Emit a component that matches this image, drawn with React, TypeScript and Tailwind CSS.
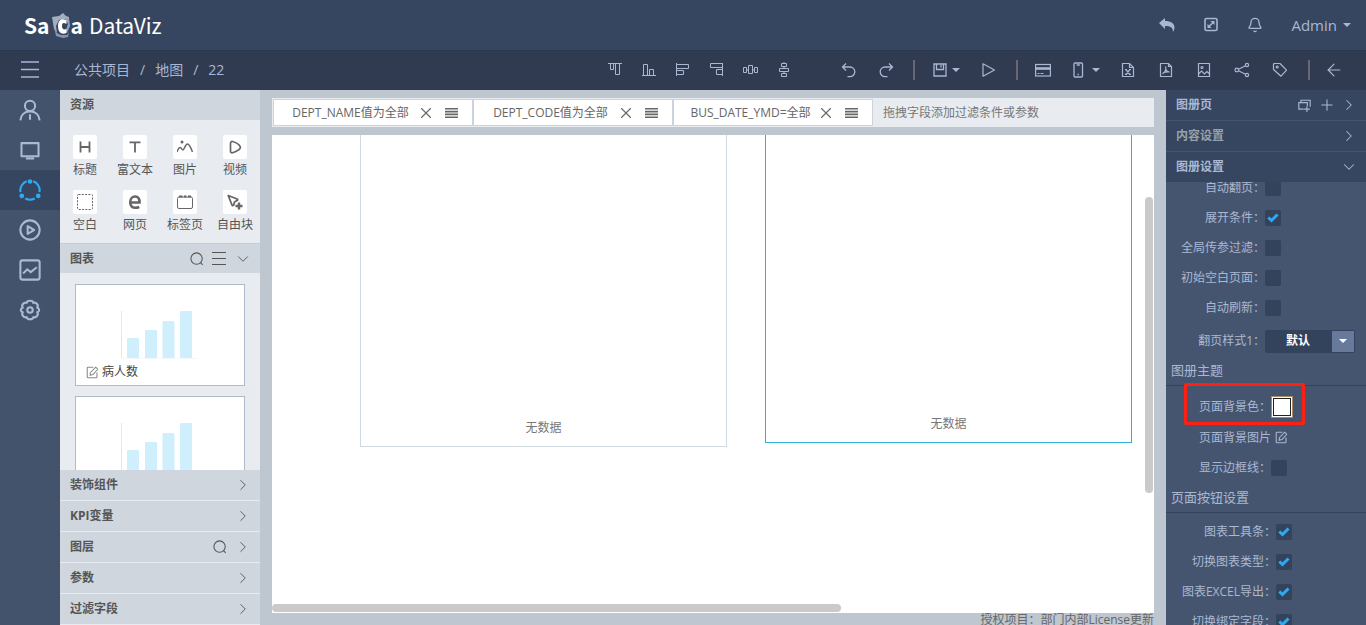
import type { ReactNode } from "react";
import { ArrowLeft, Bell, ChevronDown, ChevronRight, Plus, X } from "lucide-react";

interface IconProps {
  size?: number;
  width?: number;
  className?: string;
  children: ReactNode;
}

// 16x16 outline icon
function Icon({ size = 16, width = 1, className = "", children }: IconProps) {
  return (
    <svg
      width={size}
      height={size}
      viewBox="0 0 16 16"
      fill="none"
      stroke="currentColor"
      strokeWidth={width}
      className={`shrink-0 ${className}`}
      aria-hidden="true"
    >
      {children}
    </svg>
  );
}

function Caret() {
  return (
    <svg width="8" height="4" viewBox="0 0 8 4" fill="currentColor" className="shrink-0" aria-hidden="true">
      <path d="M0 0h8L4 4z" />
    </svg>
  );
}

function SearchIcon() {
  return (
    <Icon size={14} width={1.2}>
      <circle cx="7.5" cy="7.5" r="6.5" />
      <path d="M12 12.2l2.5 2.5" />
    </Icon>
  );
}

const alignTools = [
  { label: "顶端对齐", icon: <path d="M1 1.5h14M3.5 1.5v6h3v-6M8.5 1.5v11h4v-11" /> },
  { label: "底端对齐", icon: <path d="M1 13.5h14M2.5 13.5v-11h4v11M8.5 13.5v-6h4v6" /> },
  { label: "左对齐", icon: <path d="M1.5 1v13M1.5 2.5h12v4h-12M1.5 8.5h7v4h-7" /> },
  { label: "右对齐", icon: <path d="M13.5 1v13M13.5 1.5h-12v4h12M13.5 7.5h-6v5h6" /> },
  {
    label: "水平分布",
    icon: <path d="M.5 5.5h3v5h-3zM5.5 3.5h4v8h-4zM11.5 5.5h3v5h-3zM3.5 8h2M9.5 8h2" />,
  },
  {
    label: "垂直分布",
    icon: <path d="M4.5 1.5h5v3h-5zM2.5 6.5h9v3h-9zM4.5 11.5h5v3h-5zM7 0v1.5M7 4.5v2M7 9.5v2" />,
  },
];

const fileTools = [
  {
    label: "导出Excel",
    icon: (
      <>
        <path d="M2.5 1.5h7l4 4v9h-11zM9.5 1.5v4h4" />
        <path d="M5.8 7.5l4.2 5M10 7.5l-4.2 5M5 7.5h2M9 7.5h2M5 12.5h2M9 12.5h2" />
      </>
    ),
  },
  {
    label: "导出PDF",
    icon: (
      <>
        <path d="M2.5 1.5h8l3 3v10h-11zM10.5 1.5v3h3" />
        <path d="M7.5 4.5c1 3-1 6-3 7.5M7.5 7c.8 2 2.2 3 4 3M5 10.8c2-.8 4-1.2 6.5-.8" />
      </>
    ),
  },
  {
    label: "导出图片",
    icon: (
      <>
        <path d="M2.5 1.5h11v13h-11zM2.5 12l3-3 3 3 2.5-2.5 3 3" />
        <circle cx="6" cy="5.5" r="1" />
      </>
    ),
  },
  {
    label: "分享",
    icon: (
      <>
        <circle cx="2.8" cy="8" r="1.8" />
        <circle cx="13" cy="3" r="1.6" />
        <circle cx="13" cy="13" r="1.6" />
        <path d="M4.5 7.2l7-3.4M4.5 8.8l7 3.4" />
      </>
    ),
  },
  {
    label: "标签",
    icon: (
      <>
        <path d="M1.5 2.5q0-1 1-1H8l6.500 6.700-5.500 6-7.500-6.700z" strokeLinejoin="round" />
        <circle cx="5.2" cy="5" r="1" />
      </>
    ),
  },
];

const railItems = [
  {
    label: "用户",
    icon: (
      <>
        <circle cx="8" cy="5" r="3.7" />
        <path d="M1 15.5C1.3 11.7 3.8 9 8 9s6.7 2.7 7 6.500M8 11v4" />
      </>
    ),
  },
  { label: "数据", icon: <path d="M1.8 3h12.400v9.500H1.800zM5 14.200h6" strokeLinejoin="round" /> },
  {
    label: "图册",
    icon: (
      <>
        <path d="M5.6 1.7A7 7 0 0 0 1.1 9.500M10.400 1.700a7 7 0 0 1 4.500 7.800M4.600 14.200a7 7 0 0 0 6.800 0" />
        <g fill="currentColor" stroke="none">
          <circle cx="8" cy="1.8" r="1.7" />
          <circle cx="2" cy="12.3" r="1.7" />
          <circle cx="14" cy="12.3" r="1.7" />
        </g>
      </>
    ),
  },
  {
    label: "播放",
    icon: (
      <>
        <circle cx="8" cy="8" r="7" />
        <path d="M6.3 5.2v5.6L11 8z" strokeLinejoin="round" />
      </>
    ),
  },
  {
    label: "分析",
    icon: (
      <>
        <rect x="1" y="1" width="14" height="14" rx="1.5" />
        <path d="M3 10.5l3-3 2.5 2L13 6" />
      </>
    ),
  },
  {
    label: "设置",
    icon: (
      <>
        <path
          d="M5.600 2.800C5.800.7 10.200.7 10.400 2.800c2-.8 4.300 1.800 2.800 3.600 2 .5 2 2.700 0 3.200 1.500 1.800-.8 4.400-2.800 3.600-.2 2.100-4.600 2.100-4.800 0-2 .8-4.300-1.800-2.800-3.600-2-.5-2-2.700 0-3.200C1.300 4.600 3.600 2 5.600 2.800z"
          strokeLinejoin="round"
        />
        <circle cx="8" cy="8" r="2" />
      </>
    ),
  },
];

const resources = [
  { label: "标题", icon: <path d="M3.500 2.500v11M12.500 2.500v11M3.500 8h9" strokeWidth="1.8" /> },
  { label: "富文本", icon: <path d="M2.500 3.300h11M8 3.300v10.200" strokeWidth="1.8" /> },
  {
    label: "图片",
    icon: (
      <>
        <path d="M0 13c1-3 2-4.500 3.200-4.500S5 11 6 11s2.500-6 4.500-6 3.500 4 5 8" strokeWidth="1.5" />
        <circle cx="5" cy="3" r="1.5" fill="currentColor" stroke="none" />
      </>
    ),
  },
  {
    label: "视频",
    icon: (
      <path
        d="M3.500 4.500v8c0 1 1 1.500 2 1.200C9 12.500 12 11 13 9.500c.6-.8.6-1.500 0-2.300C12 5.500 9 3.500 5.500 2.500c-1-.2-2 .5-2 2z"
        strokeWidth="1.7"
      />
    ),
  },
  { label: "空白", icon: <rect x=".5" y=".5" width="15" height="15" rx="1" strokeDasharray="2 1.3" /> },
  {
    label: "网页",
    icon: (
      <path
        d="M3 8.500h9.500C12.700 4.500 11 2.500 8.200 2.500S3.200 4.800 3.200 8.200s2 5.600 5.200 5.600c1.500 0 2.700-.3 3.800-1"
        strokeWidth="2.6"
      />
    ),
  },
  {
    label: "标签页",
    icon: (
      <>
        <rect x=".5" y="3" width="15" height="11.5" rx="1.5" />
        <path d="M2 2.500h3.500M7 2.500h2.500M11 2.500h3" strokeWidth="2" />
      </>
    ),
  },
  {
    label: "自由块",
    icon: (
      <>
        <path
          d="M1.200 1.500l9 3.500c.8.5.6 1-.2 1.500L7.500 8l-.8 3c-.5.8-1.300.8-1.700 0z"
          strokeWidth="1.8"
          strokeLinejoin="round"
        />
        <path d="M8.500 12h7M12 8.500v7" strokeWidth="2.4" />
      </>
    ),
  },
];

const sections = ["装饰组件", "KPI变量", "图层", "参数", "过滤字段"];
const filters = ["DEPT_NAME值为全部", "DEPT_CODE值为全部", "BUS_DATE_YMD=全部"];

const pageOptions = [
  { label: "自动翻页：", checked: false },
  { label: "展开条件：", checked: true },
  { label: "全局传参过滤：", checked: false },
  { label: "初始空白页面：", checked: false },
  { label: "自动刷新：", checked: false },
];

const buttonOptions = ["图表工具条：", "切换图表类型：", "图表EXCEL导出：", "切换绑定字段："];

function EditIcon({ className = "" }: { className?: string }) {
  return (
    <Icon size={13} width={1.3} className={className}>
      <path d="M9 1.500H2.500a1 1 0 0 0-1 1v11a1 1 0 0 0 1 1h10a1 1 0 0 0 1-1V8" />
      <path d="M5 11.500l.5-3.500L12 1.500 14.500 4 8.500 10.500z" strokeLinejoin="round" />
    </Icon>
  );
}

function Logo() {
  return (
    <a
      href="#"
      className="flex items-center pl-6 text-[21px] leading-none text-white font-['Noto_Sans_CJK_SC','Noto_Sans',sans-serif]"
    >
      <span className="font-bold">Sa</span>
      <svg width="21" height="26" viewBox="0 0 21 26" aria-hidden="true">
        <path d="M2 5l7-1 4-3 3 3 3 1v6l-4-4-6 1-3 6 1 7-3-4z" fill="#a3aebe" />
        <path d="M4 15l3 6 4 2h6l2-3-1 5-5 1-7-2z" fill="#8795a9" />
        <path d="M15 6l4 0 1 8-3 7-1-3 2-6z" fill="#96a3b5" />
        <path d="M16.500 8.500C12 5.500 8 8 8 14c0 6.500 3.500 9 8.500 7v-4c-3 1-4.500 0-4.500-3s1.500-3.800 4.500-2z" fill="#fff" />
      </svg>
      <span className="font-bold">a</span>
      <span className="pl-1.5">DataViz</span>
    </a>
  );
}

function ToolSeparator() {
  return <span className="ml-[9px] mr-1.5 h-5 w-0.5 bg-[#666a70]" />;
}

function Checkbox({ id, checked }: { id: string; checked: boolean }) {
  return (
    <span className="relative size-4">
      <input
        id={id}
        type="checkbox"
        defaultChecked={checked}
        className="peer block size-4 appearance-none rounded-xs bg-[#34435c]"
      />
      <svg
        viewBox="0 0 16 16"
        className="pointer-events-none absolute inset-0 hidden size-4 peer-checked:block"
        fill="none"
        stroke="#2cabf2"
        strokeWidth="3"
        aria-hidden="true"
      >
        <path d="M3.300 7.500l3.200 3 6-6" />
      </svg>
    </span>
  );
}

function SectionTitle({ children }: { children: ReactNode }) {
  return <h3 className="h-[27px] border-b border-[#34435c] pl-[5px] text-[13px] leading-[22px]">{children}</h3>;
}

function ChartCard({ name }: { name?: string }) {
  return (
    <div className="flex h-[102px] shrink-0 flex-col border border-[#adbac9] bg-white px-2.5">
      <svg width="90" height="50" viewBox="0 0 90 50" className="ml-[34px] mt-[25px]" aria-hidden="true">
        <path d="M1.500 1v47" stroke="#e6e8ea" />
        <path d="M2 48.500h76" stroke="#f6f7f8" />
        <g fill="#d0effd">
          <path d="M7 48V29q0-1 1-1h10q1 0 1 1v19zM25 48V21q0-1 1-1h10q1 0 1 1v27zM42.500 48V12q0-1 1-1h10q1 0 1 1v36zM60 48V2q0-1 1-1h10q1 0 1 1v46z" />
        </g>
      </svg>
      {name && (
        <button type="button" className="flex items-center gap-[3px] text-xs leading-6 text-[#444]">
          <EditIcon className="text-[#888]" />
          {name}
        </button>
      )}
    </div>
  );
}

function Header() {
  return (
    <header className="flex h-[50px] shrink-0 items-center justify-between bg-[#364660] text-[#a9b7d1]">
      <Logo />
      <div className="flex items-center pr-[15px]">
        <button type="button" aria-label="返回" className="flex w-11 justify-center">
          <svg width="16" height="14" viewBox="0 0 16 14" fill="currentColor" aria-hidden="true">
            <path d="M0 5l6-5v3c6 0 9.500 2.500 9.500 6.500 0 1.500-.5 3-1.500 4.500 0-4.500-2.500-6-8-6v3z" />
          </svg>
        </button>
        <button type="button" aria-label="全屏" className="flex w-11 justify-center">
          <Icon width={1.6}>
            <rect x="2" y="1.5" width="12" height="12" rx="1.5" />
            <path d="M5.500 10l5-5" />
            <path d="M7.500 4h4v4zM4.500 7v4h4z" fill="currentColor" stroke="none" />
          </Icon>
        </button>
        <button type="button" aria-label="通知" className="flex w-11 justify-center">
          <Bell size={16} strokeWidth={2} />
        </button>
        <button type="button" className="flex items-center gap-1.5 pl-3.5 text-[15px]">
          Admin
          <Caret />
        </button>
      </div>
    </header>
  );
}

function Toolbar() {
  return (
    <div className="flex h-10 shrink-0 items-center border-t border-[#2b374c] bg-[#303b52] pb-0.5 text-[#a9b7d1]">
      <button type="button" aria-label="菜单" className="flex w-[60px] justify-center">
        <svg width="18" height="17" viewBox="0 0 18 17" stroke="currentColor" strokeWidth="1.5" aria-hidden="true">
          <path d="M0 1h18M0 8.500h18M0 16h18" />
        </svg>
      </button>
      <nav className="flex gap-2.5 pl-3.5 text-sm">
        <a href="#">公共项目</a>
        <span>/</span>
        <a href="#">地图</a>
        <span>/</span>
        <a href="#">22</a>
      </nav>
      <div className="ml-auto flex items-center pr-3.5">
        {alignTools.map((tool) => (
          <button key={tool.label} type="button" aria-label={tool.label} className="flex w-[34px] justify-center">
            <Icon>{tool.icon}</Icon>
          </button>
        ))}
        <button type="button" aria-label="撤销" className="ml-7 flex w-[37px] justify-center">
          <Icon width={1.3}>
            <path d="M5 1.500L1.500 5 5 8.500M1.500 5H9a4.800 4.800 0 0 1 0 9.600H6.500" />
          </Icon>
        </button>
        <button type="button" aria-label="重做" className="flex w-[37px] justify-center">
          <Icon width={1.3}>
            <path d="M11 1.500L14.500 5 11 8.500M14.500 5H7a4.800 4.800 0 0 0 0 9.600h2.500" />
          </Icon>
        </button>
        <ToolSeparator />
        <button type="button" aria-label="保存" className="flex w-[49px] items-center justify-center gap-1">
          <Icon width={1.3}>
            <path d="M2 2h12v12H2zM4.500 2v5.500h7V2M9 3v2.500" />
          </Icon>
          <Caret />
        </button>
        <button type="button" aria-label="预览" className="flex w-[37px] justify-center">
          <Icon width={1.2}>
            <path d="M2 1.800v12.400L13.500 8z" strokeLinejoin="round" />
          </Icon>
        </button>
        <ToolSeparator />
        <button type="button" aria-label="卡片" className="flex w-[37px] justify-center">
          <Icon width={1.2}>
            <rect x=".6" y="2.500" width="14.800" height="11.500" />
            <path d="M0 6.500h16" strokeWidth="2.6" />
            <path d="M2.500 11.500h2M5.500 11.500h3" />
          </Icon>
        </button>
        <button type="button" aria-label="移动端" className="flex w-12 items-center justify-center gap-1.5">
          <Icon width={1.3}>
            <rect x="4" y="1" width="8.500" height="14" rx="1" />
            <path d="M6.800 3h3M7.500 12.500h1.400" />
          </Icon>
          <Caret />
        </button>
        {fileTools.map((tool) => (
          <button key={tool.label} type="button" aria-label={tool.label} className="flex w-[38px] justify-center">
            <Icon width={1.2}>{tool.icon}</Icon>
          </button>
        ))}
        <ToolSeparator />
        <button type="button" aria-label="退出" className="flex w-9 justify-center">
          <ArrowLeft size={20} strokeWidth={1.4} />
        </button>
      </div>
    </div>
  );
}

function NavRail() {
  return (
    <nav className="flex w-[60px] shrink-0 flex-col bg-[#44536c] text-[#a9bad4]">
      {railItems.map((item) => (
        <a
          key={item.label}
          href="#"
          aria-label={item.label}
          className={`flex h-10 items-center justify-center ${
            item.label === "图册" ? "bg-[#364660] text-[#2cabf2]" : ""
          }`}
        >
          <Icon size={22} width={1.5}>
            {item.icon}
          </Icon>
        </a>
      ))}
    </nav>
  );
}

function ResourcePanel() {
  return (
    <aside className="flex w-[200px] shrink-0 flex-col bg-[#e8ebf0] text-xs text-[#555]">
      <h2 className="h-[30px] shrink-0 bg-[#cfd6de] pl-2.5 font-bold leading-[29px]">资源</h2>
      <div className="grid shrink-0 grid-cols-4 gap-y-[9px] pb-[7px] pt-[15px]">
        {resources.map((item) => (
          <button key={item.label} type="button" className="flex flex-col items-center leading-[22px]">
            <span className="flex size-6 items-center justify-center rounded-xs bg-white text-[#666]">
              <Icon>{item.icon}</Icon>
            </span>
            {item.label}
          </button>
        ))}
      </div>
      <div className="flex h-[30px] shrink-0 items-center border-t border-[#c5ccd5] bg-[#cfd6de] px-2">
        <h2 className="flex-1 pl-0.5 font-bold">图表</h2>
        <button type="button" aria-label="搜索图表">
          <SearchIcon />
        </button>
        <button type="button" aria-label="列表" className="ml-2">
          <svg width="14" height="13" viewBox="0 0 14 13" stroke="currentColor" aria-hidden="true">
            <path d="M0 .5h14M0 6.500h14M0 12.500h14" />
          </svg>
        </button>
        <button type="button" aria-label="收起" className="ml-2">
          <ChevronDown size={18} strokeWidth={1.2} />
        </button>
      </div>
      <div className="flex min-h-0 flex-1 flex-col gap-2.5 overflow-hidden px-[15px] pt-[11px]">
        <ChartCard name="病人数" />
        <ChartCard />
      </div>
      {sections.map((section) => (
        <div
          key={section}
          className="flex h-[31px] shrink-0 items-center border-b border-[#e8ebf0] bg-[#cfd6de] px-2"
        >
          <h2 className="flex-1 pl-0.5 font-bold">{section}</h2>
          {section === "图层" && (
            <button type="button" aria-label="搜索图层" className="mr-[7px]">
              <SearchIcon />
            </button>
          )}
          <button type="button" aria-label={`展开${section}`}>
            <ChevronRight size={18} strokeWidth={1.2} />
          </button>
        </div>
      ))}
    </aside>
  );
}

function Workspace() {
  return (
    <main className="flex min-w-0 flex-1 flex-col bg-[#bec6d0] px-3 pt-2 text-xs text-[#666]">
      <div className="flex h-[29px] shrink-0 items-stretch bg-[#e8ebf0] py-px pl-px">
        {filters.map((filter) => (
          <div key={filter} className="flex w-[200px] items-center border border-[#cbd3dd] bg-white pl-2.5 pr-3.5">
            <span className="flex-1 text-center">{filter}</span>
            <button type="button" aria-label="删除" className="flex w-[18px] justify-center">
              <X size={18} strokeWidth={1.5} />
            </button>
            <button type="button" aria-label="选项" className="ml-2.5">
              <svg width="13" height="10" viewBox="0 0 13 10" stroke="currentColor" strokeWidth="1.6" aria-hidden="true">
                <path d="M0 .8h13M0 3.600h13M0 6.400h13M0 9.200h13" />
              </svg>
            </button>
          </div>
        ))}
        <span className="self-center pl-2.5 text-[#777]">拖拽字段添加过滤条件或参数</span>
      </div>
      <div className="relative mt-2 min-h-0 flex-1 overflow-hidden bg-white text-[#777]">
        <div className="absolute -top-5 left-[88px] flex h-[332px] w-[367px] items-end justify-center border border-[#cfdae3] pb-2.5">
          无数据
        </div>
        <div className="absolute -top-5 left-[493px] flex h-[328px] w-[367px] items-end justify-center border border-[#2bb0da] pb-2.5">
          无数据
        </div>
        <div className="absolute right-px top-[13%] h-[62%] w-2 rounded-full bg-[#cacaca]" />
        <div className="absolute bottom-px left-0 h-2 w-[64.5%] rounded-full bg-[#cacaca]" />
      </div>
      <footer className="h-3 shrink-0 text-right leading-[14px]">授权项目：部门内部License更新</footer>
    </main>
  );
}

function SettingsPanel() {
  return (
    <aside className="flex w-[200px] shrink-0 flex-col bg-[#455570] text-xs text-[#aab8d2]">
      <div className="flex h-[31px] shrink-0 items-center border-b border-[#455570] bg-[#364660] px-2">
        <h2 className="flex-1 pl-0.5 font-bold">图册页</h2>
        <button type="button" aria-label="复制页">
          <Icon size={13} width={1.4}>
            <path d="M3.500 4V1.500H15v8M7 12.500H1V4.500h10.500v4M11 9v7M7.500 12.500h7" />
          </Icon>
        </button>
        <button type="button" aria-label="新增页" className="ml-[7px]">
          <Plus size={18} strokeWidth={1.4} />
        </button>
        <button type="button" aria-label="展开图册页" className="ml-1">
          <ChevronRight size={18} strokeWidth={1.4} />
        </button>
      </div>
      <div className="flex h-[31px] shrink-0 items-center border-b border-[#455570] bg-[#364660] px-2">
        <h2 className="flex-1 pl-0.5 font-bold text-[#99a1a8]">内容设置</h2>
        <button type="button" aria-label="展开内容设置">
          <ChevronRight size={18} strokeWidth={1.4} />
        </button>
      </div>
      <div className="flex h-[30px] shrink-0 items-center bg-[#364660] px-2">
        <h2 className="flex-1 pl-0.5 font-bold">图册设置</h2>
        <button type="button" aria-label="收起图册设置">
          <ChevronDown size={18} strokeWidth={1.4} />
        </button>
      </div>

      <div className="min-h-0 flex-1 overflow-hidden">
        <div className="-mt-[9px]">
          {pageOptions.map((option, i) => (
            <div key={option.label} className="flex h-[30px] items-center">
              <label htmlFor={`page-option-${i}`} className="w-[99px] text-right">
                {option.label}
              </label>
              <Checkbox id={`page-option-${i}`} checked={option.checked} />
            </div>
          ))}
          <div className="flex h-9 items-center">
            <label htmlFor="page-style" className="w-[99px] text-right">
              翻页样式1：
            </label>
            <div className="relative">
              <select
                id="page-style"
                className="block h-[23px] w-[90px] appearance-none rounded-xs bg-[#34435c] pl-[21px] font-bold text-white"
              >
                <option>默认</option>
              </select>
              <span className="pointer-events-none absolute inset-y-px right-px flex w-[22px] items-center justify-center bg-[#687a9b] text-white">
                <Caret />
              </span>
            </div>
          </div>
          <SectionTitle>图册主题</SectionTitle>
          <div className="pb-[3px] pt-1.5">
            <div className="relative flex h-[30px] items-center">
              <label htmlFor="page-color" className="w-[105px] text-right">
                页面背景色：
              </label>
              <button
                type="button"
                id="page-color"
                aria-label="选择颜色"
                className="size-[22px] border border-[#a58a66] bg-white p-px"
              >
                <span className="block size-full border border-[#222]" />
              </button>
              <span className="pointer-events-none absolute -bottom-[3px] -top-[9px] left-[18px] w-[121px] rounded-xs border-3 border-[#ff2014]" />
            </div>
            <div className="flex h-[31px] items-center">
              <span className="w-[105px] text-right">页面背景图片</span>
              <button type="button" aria-label="编辑背景图片" className="ml-1">
                <EditIcon />
              </button>
            </div>
            <div className="flex h-[30px] items-center">
              <label htmlFor="show-border" className="w-[105px] text-right">
                显示边框线：
              </label>
              <Checkbox id="show-border" checked={false} />
            </div>
          </div>
          <SectionTitle>页面按钮设置</SectionTitle>
          <div className="pt-1">
            {buttonOptions.map((label, i) => (
              <div key={label} className="flex h-[30px] items-center">
                <label htmlFor={`button-option-${i}`} className="w-[110px] text-right">
                  {label}
                </label>
                <Checkbox id={`button-option-${i}`} checked />
              </div>
            ))}
          </div>
        </div>
      </div>
    </aside>
  );
}

export default function App() {
  return (
    <div className="flex h-screen flex-col overflow-hidden font-['Open_Sans','Noto_Sans_CJK_SC',sans-serif]">
      <Header />
      <Toolbar />
      <div className="flex min-h-0 flex-1">
        <NavRail />
        <ResourcePanel />
        <Workspace />
        <SettingsPanel />
      </div>
    </div>
  );
}
